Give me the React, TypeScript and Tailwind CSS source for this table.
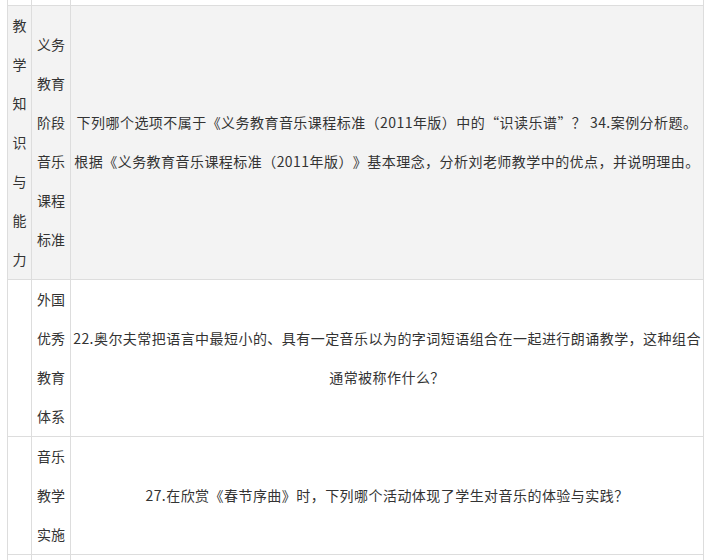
const font = {
  fontFamily: '"Microsoft YaHei", "Noto Sans CJK SC", "Noto Sans", sans-serif',
}

function Lines({ lines, wide }: { lines: string[]; wide?: boolean }) {
  return (
    <div className={wide ? 'flex flex-col items-center tracking-[0.45px]' : 'flex flex-col items-center'}>
      {lines.map((t, i) => (
        <span key={i} className="whitespace-nowrap leading-[39px]">
          {t}
        </span>
      ))}
    </div>
  )
}

const rows = [
  {
    bg: 'bg-[#f3f3f3]',
    h: 'h-[274px]',
    first: ['教', '学', '知', '识', '与', '能', '力'],
    second: ['义务', '教育', '阶段', '音乐', '课程', '标准'],
    text: [
      '下列哪个选项不属于《义务教育音乐课程标准（2011年版）中的“识读乐谱”？ 34.案例分析题。',
      '根据《义务教育音乐课程标准（2011年版）》基本理念，分析刘老师教学中的优点，并说明理由。',
    ],
  },
  {
    bg: 'bg-white',
    h: 'h-[157px]',
    first: [],
    second: ['外国', '优秀', '教育', '体系'],
    text: [
      '22.奥尔夫常把语言中最短小的、具有一定音乐以为的字词短语组合在一起进行朗诵教学，这种组合',
      '通常被称作什么？',
    ],
  },
  {
    bg: 'bg-white',
    h: 'h-[118px]',
    first: [],
    second: ['音乐', '教学', '实施'],
    text: ['27.在欣赏《春节序曲》时，下列哪个活动体现了学生对音乐的体验与实践？'],
  },
]

export default function App() {
  return (
    <div
      className="h-[560px] w-[710px] overflow-hidden bg-white pl-[7px] text-[14px] text-[#333] [text-spacing-trim:space-all]"
      style={font}
    >
      <table className="w-[697px] table-fixed border-collapse">
        <colgroup>
          <col className="w-[24px]" />
          <col className="w-[39px]" />
          <col />
        </colgroup>
        <tbody>
          <tr className="h-[5px]">
            <td className="border-x border-b border-[#dddddd] p-0" />
            <td className="border-x border-b border-[#dddddd] p-0" />
            <td className="border-x border-b border-[#dddddd] p-0" />
          </tr>
          {rows.map((r, i) => (
            <tr key={i} className={`${r.bg} ${r.h}`}>
              <td className="border border-[#dddddd] p-0 align-middle">
                <Lines lines={r.first} />
              </td>
              <td className="border border-[#dddddd] p-0 align-middle">
                <Lines lines={r.second} />
              </td>
              <td className="border border-[#dddddd] p-0 align-middle">
                <Lines lines={r.text} wide />
              </td>
            </tr>
          ))}
          <tr className="h-[40px]">
            <td className="border border-[#dddddd] p-0" />
            <td className="border border-[#dddddd] p-0" />
            <td className="border border-[#dddddd] p-0" />
          </tr>
        </tbody>
      </table>
    </div>
  )
}
